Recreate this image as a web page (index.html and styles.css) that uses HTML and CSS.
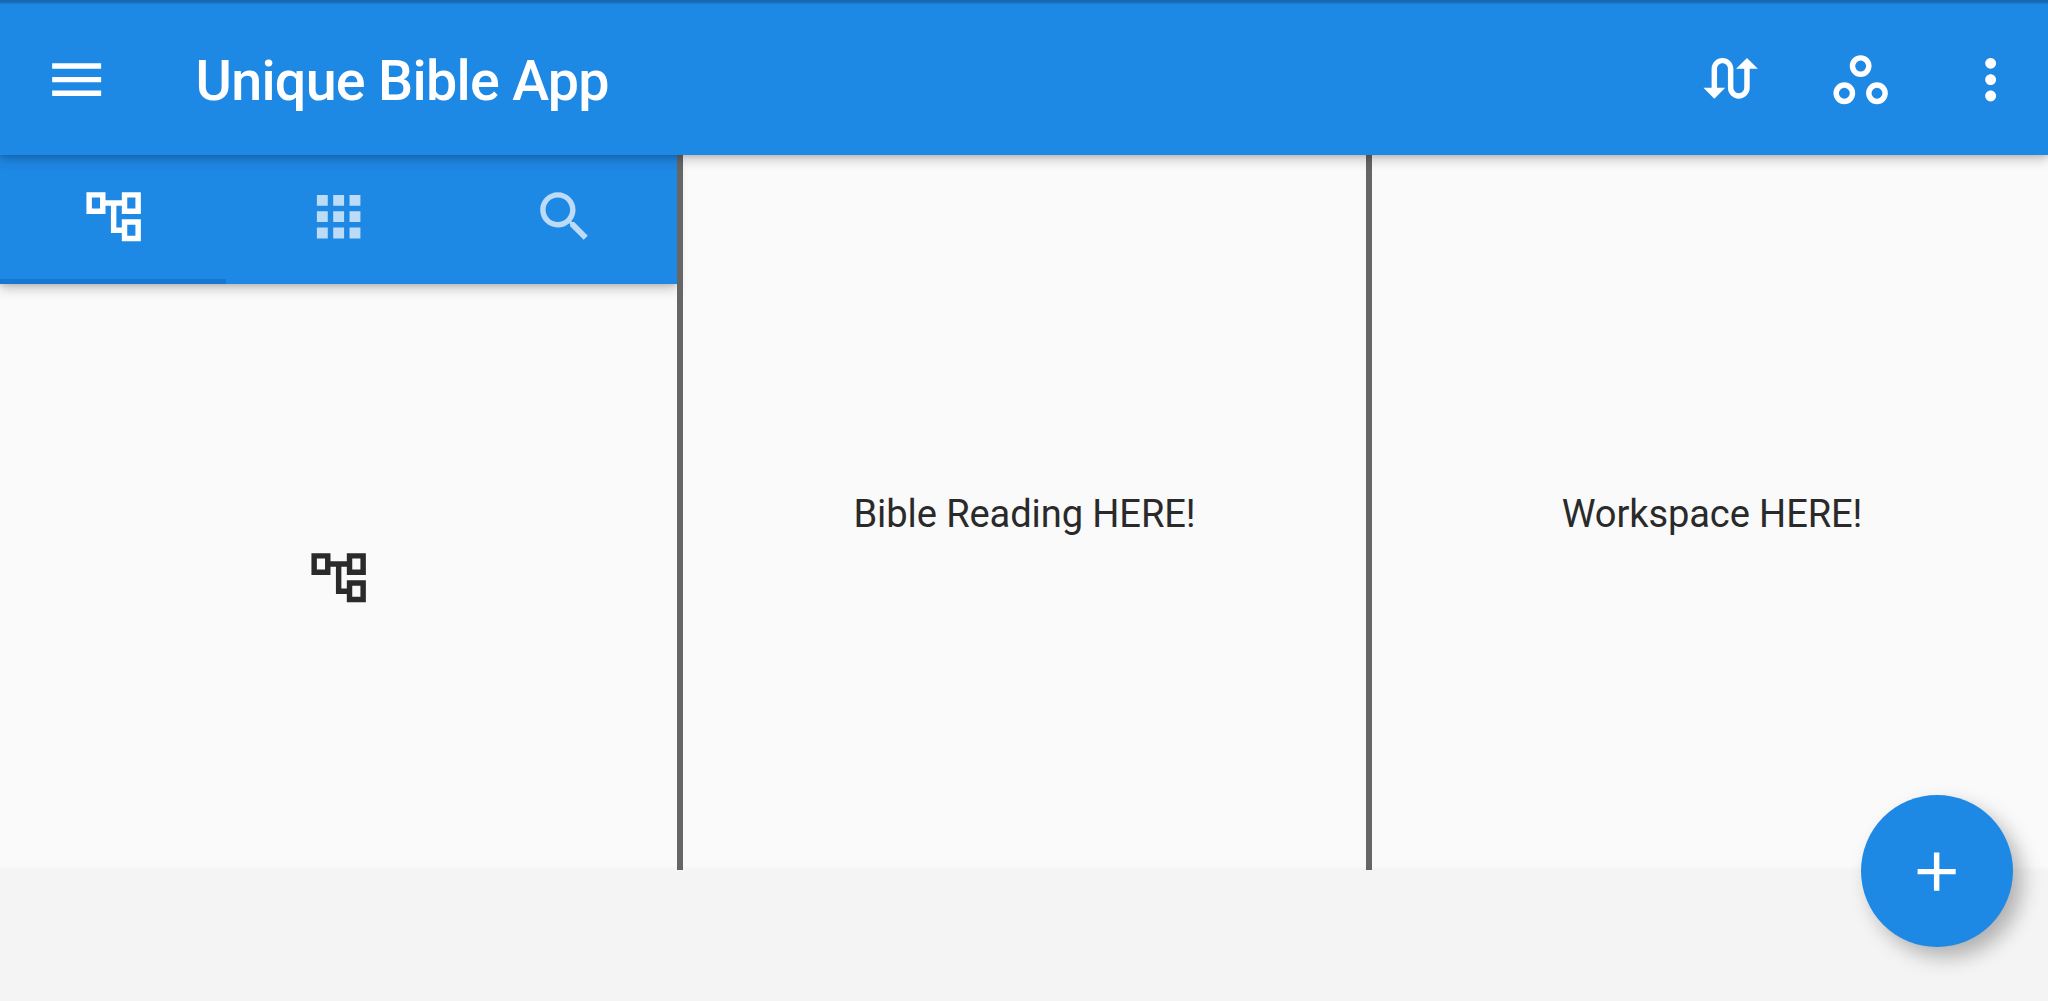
FILE: index.html
```html
<!DOCTYPE html>
<html lang="en">
<head>
<meta charset="utf-8">
<title>Unique Bible App</title>
<link rel="stylesheet" href="styles.css">
</head>
<body>
<header class="app-bar">
  <svg class="icon" viewBox="0 0 24 24"><path d="M3 18h18v-2H3v2zm0-5h18v-2H3v2zm0-7v2h18V6H3z"/></svg>
  <h1 class="title">Unique Bible App</h1>
  <div class="actions">
    <svg class="icon" viewBox="0 0 24 24"><path d="M18 4l-4 4h3v7c0 1.1-.9 2-2 2s-2-.9-2-2V8c0-2.21-1.79-4-4-4S5 5.79 5 8v7H2l4 4 4-4H7V8c0-1.1.9-2 2-2s2 .9 2 2v7c0 2.21 1.79 4 4 4s4-1.79 4-4V8h3l-4-4z"/></svg>
    <svg class="icon ring" viewBox="0 0 24 24"><circle cx="12" cy="7" r="3"/><circle cx="6" cy="17" r="3"/><circle cx="18" cy="17" r="3"/></svg>
    <svg class="icon" viewBox="0 0 24 24"><path d="M12 8c1.1 0 2-.9 2-2s-.9-2-2-2-2 .9-2 2 .9 2 2 2zm0 2c-1.1 0-2 .9-2 2s.9 2 2 2 2-.9 2-2-.9-2-2-2zm0 6c-1.1 0-2 .9-2 2s.9 2 2 2 2-.9 2-2-.9-2-2-2z"/></svg>
  </div>
</header>
<main class="panes">
  <section class="pane pane-nav">
    <nav class="tabs">
      <div class="tab active"><svg class="icon" viewBox="0 0 24 24"><path d="M22 11V3h-7v3H9V3H2v8h7V8h2v10h4v3h7v-8h-7v3h-2V8h2v3h7zM7 9H4V5h3v4zm10 6h3v4h-3v-4zm0-10h3v4h-3V5z"/></svg></div>
      <div class="tab"><svg class="icon" viewBox="0 0 24 24"><path d="M4 8h4V4H4v4zm6 12h4v-4h-4v4zm-6 0h4v-4H4v4zm0-6h4v-4H4v4zm6 0h4v-4h-4v4zm6-10v4h4V4h-4zm-6 4h4V4h-4v4zm6 6h4v-4h-4v4zm0 6h4v-4h-4v4z"/></svg></div>
      <div class="tab"><svg class="icon" viewBox="0 0 24 24"><path d="M15.5 14h-.79l-.28-.27C15.41 12.59 16 11.11 16 9.5 16 5.91 13.09 3 9.5 3S3 5.91 3 9.5 5.91 16 9.5 16c1.61 0 3.09-.59 4.23-1.57l.27.28v.79l5 4.99L20.49 19l-4.99-5zm-6 0C7.01 14 5 11.99 5 9.5S7.01 5 9.5 5 14 7.01 14 9.5 11.99 14 9.5 14z"/></svg></div>
    </nav>
    <div class="tab-view"><svg class="icon" viewBox="0 0 24 24"><path d="M22 11V3h-7v3H9V3H2v8h7V8h2v10h4v3h7v-8h-7v3h-2V8h2v3h7zM7 9H4V5h3v4zm10 6h3v4h-3v-4zm0-10h3v4h-3V5z"/></svg></div>
  </section>
  <section class="pane pane-reading"><p>Bible Reading HERE!</p></section>
  <section class="pane pane-work"><p>Workspace HERE!</p></section>
</main>
<footer class="bottom-bar"></footer>
<button class="fab" aria-label="Add"><svg class="icon" viewBox="0 0 24 24"><path d="M19 13h-6v6h-2v-6H5v-2h6V5h2v6h6v2z"/></svg></button>
</body>
</html>
```
FILE: styles.css
```css
* { box-sizing: border-box; }
body {
  margin: 0;
  height: 1001px;
  display: flex;
  flex-direction: column;
  overflow: hidden;
  background: #fafafa;
  color: #2a2a2a;
  font-family: Roboto, "Liberation Sans", sans-serif;
}
.icon {
  display: block;
  flex: none;
  width: 65.3px;
  height: 65.3px;
  fill: currentColor;
}
.ring { fill: none; stroke: currentColor; stroke-width: 2; }

.app-bar {
  position: relative;
  z-index: 2;
  flex: none;
  height: 154.6px;
  padding: 4px 25px 0 43.7px;
  display: flex;
  align-items: center;
  color: #fff;
  background: linear-gradient(#176aaf 0, #176aaf 2px, #1e88e5 4.5px);
  box-shadow: 0 5px 11px rgba(0, 0, 0, .2), 0 2px 4px rgba(0, 0, 0, .1);
}
.title {
  margin: 3px 0 0 86.5px;
  font-size: 55.6px;
  line-height: 64px;
  font-weight: 500;
  letter-spacing: -.7px;
  white-space: nowrap;
}
.actions { margin-left: auto; display: flex; gap: 64.4px; }

.panes { flex: none; height: 715px; display: flex; }
.pane { display: flex; align-items: center; justify-content: center; }
.pane p {
  margin: 0;
  padding-top: 4px;
  font-size: 38.1px;
  line-height: 46px;
  letter-spacing: -.1px;
  white-space: nowrap;
}
.pane-nav {
  width: 677px;
  flex-direction: column;
  align-items: stretch;
  justify-content: flex-start;
}
.pane-reading { width: 695px; border: solid #666; border-width: 0 6px; }
.pane-work { flex: 1; padding-left: 4px; }

.tabs {
  flex: none;
  height: 129.8px;
  padding-left: 1px;
  display: flex;
  color: #fff;
  background: #1e88e5;
  box-shadow: 0 5px 11px rgba(0, 0, 0, .2), 0 2px 4px rgba(0, 0, 0, .1);
}
.tab {
  flex: 1;
  display: flex;
  align-items: center;
  justify-content: center;
  border-bottom: 5px solid transparent;
}
.tab .icon { opacity: .7; }
.tab.active { margin-left: -1px; padding-left: 1px; border-color: #1976d2; }
.tab.active .icon { opacity: 1; }
.tab-view {
  flex: 1;
  padding: 2px 0 0 1px;
  display: flex;
  align-items: center;
  justify-content: center;
}

.bottom-bar { flex: 1; background: #f4f4f4; box-shadow: 0 -1px 4px rgba(0, 0, 0, .04); }

.fab {
  position: absolute;
  right: 35.3px;
  bottom: 53.7px;
  width: 152px;
  height: 152px;
  padding: 0;
  border: 0;
  border-radius: 50%;
  display: flex;
  align-items: center;
  justify-content: center;
  color: #fff;
  background: #1e88e5;
  box-shadow: 9px 10px 20px rgba(0, 0, 0, .28);
}
```
